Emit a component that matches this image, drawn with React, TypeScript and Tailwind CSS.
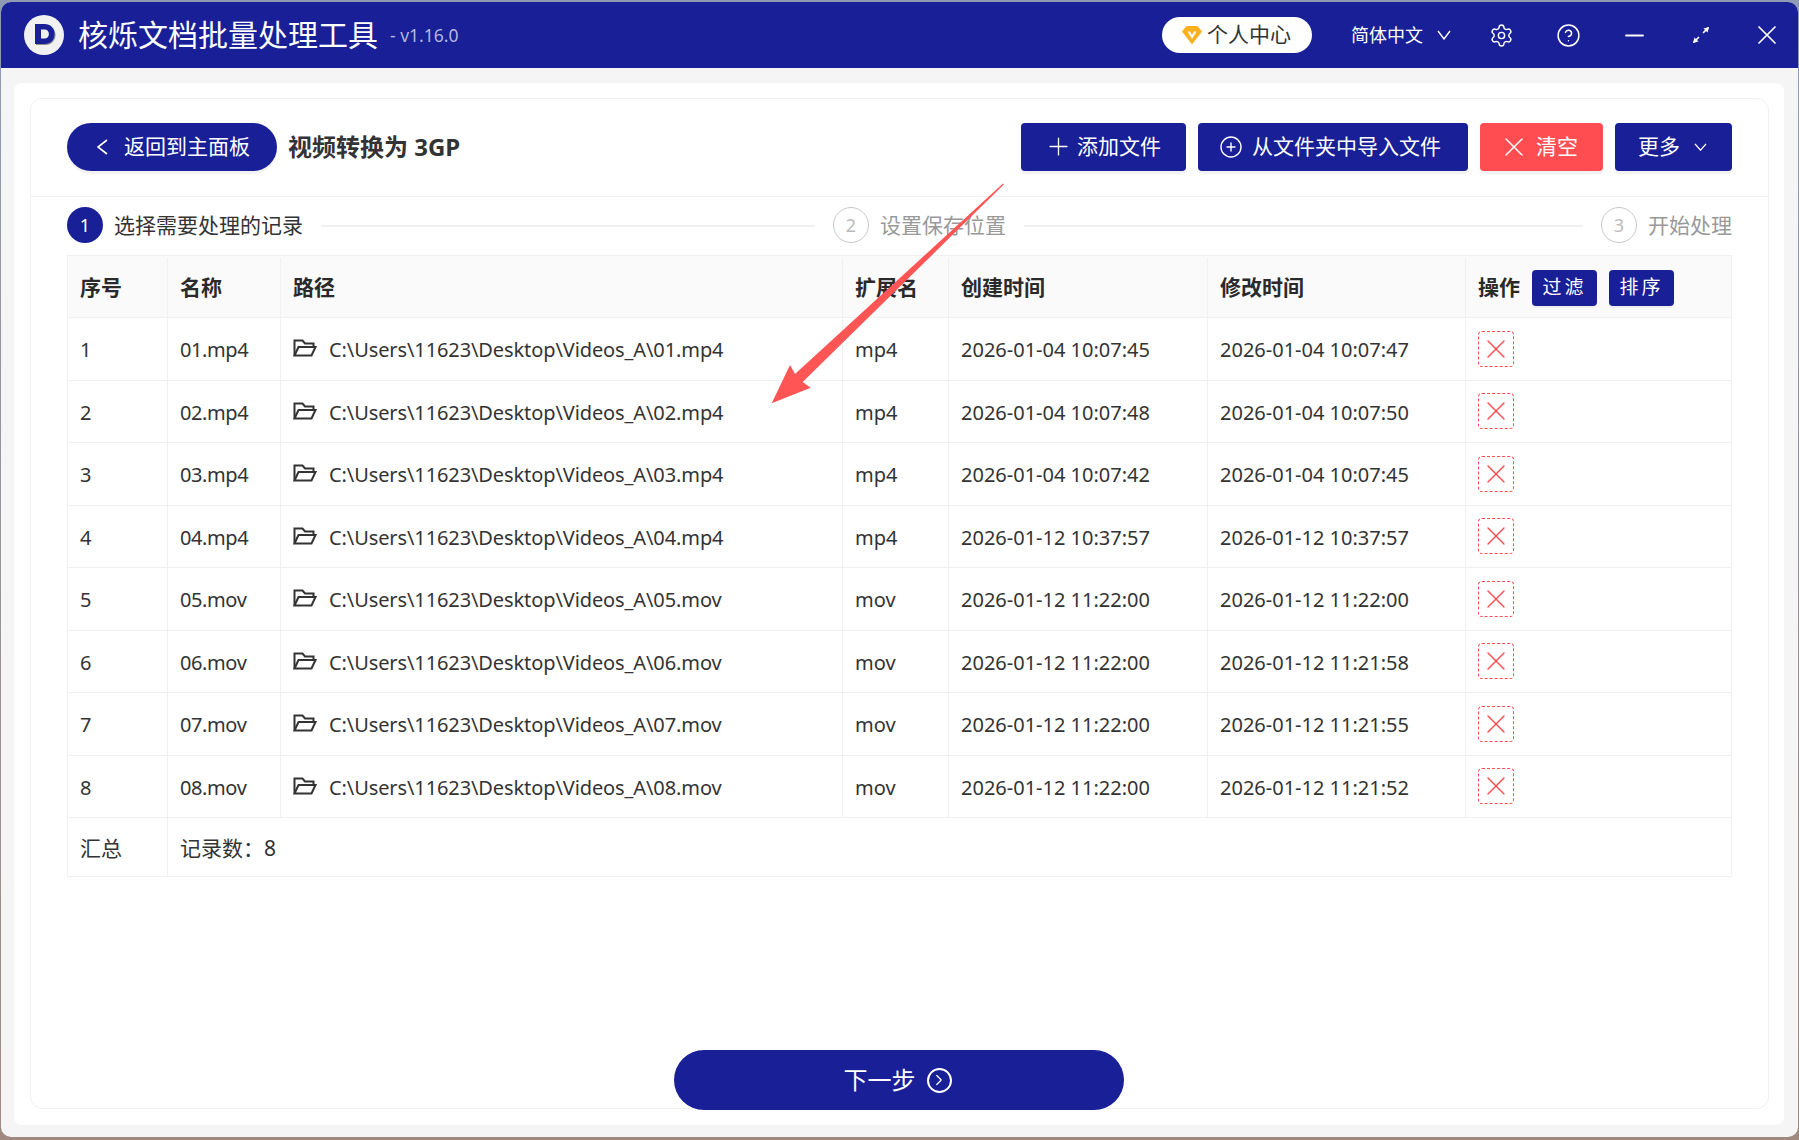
import { Plus, CirclePlus, X, Settings, CircleHelp, Minus, ChevronRight } from 'lucide-react';

const rows = [
    { id: 1, name: '01.mp4', path: 'C:\\Users\\11623\\Desktop\\Videos_A\\01.mp4', ext: 'mp4', created: '2026-01-04 10:07:45', modified: '2026-01-04 10:07:47' },
    { id: 2, name: '02.mp4', path: 'C:\\Users\\11623\\Desktop\\Videos_A\\02.mp4', ext: 'mp4', created: '2026-01-04 10:07:48', modified: '2026-01-04 10:07:50' },
    { id: 3, name: '03.mp4', path: 'C:\\Users\\11623\\Desktop\\Videos_A\\03.mp4', ext: 'mp4', created: '2026-01-04 10:07:42', modified: '2026-01-04 10:07:45' },
    { id: 4, name: '04.mp4', path: 'C:\\Users\\11623\\Desktop\\Videos_A\\04.mp4', ext: 'mp4', created: '2026-01-12 10:37:57', modified: '2026-01-12 10:37:57' },
    { id: 5, name: '05.mov', path: 'C:\\Users\\11623\\Desktop\\Videos_A\\05.mov', ext: 'mov', created: '2026-01-12 11:22:00', modified: '2026-01-12 11:22:00' },
    { id: 6, name: '06.mov', path: 'C:\\Users\\11623\\Desktop\\Videos_A\\06.mov', ext: 'mov', created: '2026-01-12 11:22:00', modified: '2026-01-12 11:21:58' },
    { id: 7, name: '07.mov', path: 'C:\\Users\\11623\\Desktop\\Videos_A\\07.mov', ext: 'mov', created: '2026-01-12 11:22:00', modified: '2026-01-12 11:21:55' },
    { id: 8, name: '08.mov', path: 'C:\\Users\\11623\\Desktop\\Videos_A\\08.mov', ext: 'mov', created: '2026-01-12 11:22:00', modified: '2026-01-12 11:21:52' },
];

const cols = 'grid grid-cols-[100px_113px_562px_106px_259px_258px_265px]';
const cell = 'flex items-center px-3 border-r border-[#f0f0f0] last:border-r-0';
const textCell = `${cell} pt-[3px]`;
const btn = 'flex items-center h-12 rounded bg-[#181f97] text-white text-[21px] shadow-[0_3px_0_#f2f2f2]';

function Logo() {
    return (
        <svg viewBox="0 0 40 40" className="w-10 h-10 shrink-0">
            <circle cx="20" cy="20" r="20" fill="#f1f1f1" />
            <path d="M12 10.5h9.5c6 0 10 4 10 9.5s-4 10-10 10H12z" fill="#8d8d8d" />
            <path d="M11 9h9.5c6 0 10 4 10 10s-4 10-10 10H11z" fill="#181f97" />
            <path d="M17 14.5h3.5c2.8 0 4.4 1.9 4.4 4.5s-1.6 4.6-4.4 4.6H17z" fill="#f1f1f1" />
        </svg>
    );
}

function Gem() {
    return (
        <svg viewBox="0 0 20 20" className="w-5 h-5 shrink-0">
            <path d="M4.5 1h11L20 6.5 10 19.5 0 6.5z" fill="#fbb01d" />
            <path d="M5.5 6.5h2.6L10 10l1.9-3.5h2.6L10 14z" fill="#fff" />
        </svg>
    );
}

function ExpandIcon() {
    return (
        <svg viewBox="0 0 18 18" className="w-[18px] h-[18px]" fill="none" stroke="#fff" strokeWidth="1.6">
            <path d="M11 7l5.5-5.5M1.5 16.5L7 11" />
            <path d="M17 1l-5.5 1.4 4.1 4.1zM1 17l5.5-1.4-4.1-4.1z" fill="#fff" stroke="none" />
        </svg>
    );
}

function Caret({ className }: { className: string }) {
    return (
        <svg viewBox="0 0 14 10" className={className} fill="none" stroke="#fff" strokeWidth="1.4" preserveAspectRatio="none">
            <path d="M1 1l6 8 6-8" />
        </svg>
    );
}

function FolderIcon() {
    return (
        <svg viewBox="0 0 24 18" className="w-6 h-[18px] mr-3 -mt-1 shrink-0" fill="none" stroke="#333333" strokeWidth="2">
            <path d="M1.5 16.5V1.5h8l2.5 3h8.5V8" />
            <path d="M1.5 16.5h17L22.5 8H5.5z" />
        </svg>
    );
}

function Step({ n, label, active }: { n: number; label: string; active?: boolean }) {
    return (
        <div className="flex items-center gap-[11px] shrink-0 -mt-0.5">
            <div className={active
                ? 'flex items-center justify-center w-9 h-9 rounded-full bg-[#181f97] text-white text-lg'
                : 'flex items-center justify-center w-9 h-9 rounded-full border border-[#c8c8c8] text-[#bbbbbb] text-lg'}>
                {n}
            </div>
            <span className={active ? 'pt-0.5 text-[21px] text-[#333333]' : 'pt-0.5 text-[21px] text-[#999999]'}>{label}</span>
        </div>
    );
}

export default function App() {
    return (
        <div className="relative w-[1799px] h-[1140px] overflow-hidden bg-gradient-to-b from-[#8f9bb3] to-[#a08a80] pt-0.5 pl-px pb-[3px] pr-px font-['Noto_Sans','Noto_Sans_CJK_SC',sans-serif] text-[#333333]">
            <div className="flex flex-col h-full rounded-[10px] overflow-hidden bg-[#f5f5f5]">
                {/* title bar */}
                <header className="flex items-center h-[66px] shrink-0 bg-[#181f97] text-white pl-[23px]">
                    <Logo />
                    <h1 className="ml-3.5 text-[30px] leading-none">核烁文档批量处理工具</h1>
                    <span className="ml-3 text-[17.5px] text-[#b4b7dc]">- v1.16.0</span>
                    <div className="ml-auto flex items-center">
                        <div className="flex items-center gap-[5px] w-[150px] h-9 pl-5 rounded-full bg-white text-[#333333] text-[21px]">
                            <Gem />
                            <span>个人中心</span>
                        </div>
                        <span className="ml-[39px] w-[73px] text-lg">简体中文</span>
                        <Caret className="ml-[13px] w-3.5 h-2.5" />
                        <Settings className="ml-[38px] w-[25px] h-[25px]" strokeWidth={1.4} />
                        <CircleHelp className="ml-[42px] w-[25px] h-[25px]" strokeWidth={1.4} />
                        <Minus className="ml-[39px] w-[29px] h-[29px]" strokeWidth={1.6} />
                        <div className="ml-[43px]"><ExpandIcon /></div>
                        <X className="ml-[41px] mr-[15px] w-8 h-8" strokeWidth={1.3} />
                    </div>
                </header>

                {/* white panel */}
                <main className="flex-1 ml-[13px] mr-3.5 mt-[15px] mb-3 flex flex-col rounded-lg bg-white pt-[15px] pl-4 pr-[15px] pb-4">
                    <div className="flex-1 flex flex-col rounded-xl border border-[#f0f0f0]">
                        <div className="flex items-center h-[98px] shrink-0 px-9 pb-0.5 border-b border-[#f0f0f0]">
                            <button className="flex items-center w-[210px] h-12 pl-[29px] gap-4 rounded-full bg-[#181f97] text-white text-[21px] shadow-[0_3px_0_#f2f2f2]">
                                <svg viewBox="0 0 12 16" className="w-3 h-4" fill="none" stroke="#fff" strokeWidth="1.6">
                                    <path d="M11 1L2 8l9 7" />
                                </svg>
                                返回到主面板
                            </button>
                            <h2 className="ml-[11px] text-2xl font-bold text-[#333333]">视频转换为 3GP</h2>
                            <div className="ml-auto flex items-center gap-3">
                                <button className={`${btn} w-[165px] pl-[23px] gap-1`}>
                                    <Plus className="w-[29px] h-[29px]" strokeWidth={1.1} />
                                    添加文件
                                </button>
                                <button className={`${btn} w-[270px] pl-[21px] gap-[9px]`}>
                                    <CirclePlus className="w-6 h-6" strokeWidth={1.4} />
                                    从文件夹中导入文件
                                </button>
                                <button className="flex items-center w-[123px] h-12 pl-[18px] gap-1.5 rounded bg-[#ff4d52] text-white text-[21px] shadow-[0_3px_0_#f2f2f2]">
                                    <X className="w-8 h-8" strokeWidth={1.1} />
                                    清空
                                </button>
                                <button className={`${btn} w-[117px] pl-[23px] gap-3.5`}>
                                    更多
                                    <Caret className="w-[13px] h-2" />
                                </button>
                            </div>
                        </div>

                        <div className="flex items-center h-[58px] shrink-0 px-9 gap-[18px]">
                            <Step n={1} label="选择需要处理的记录" active />
                            <div className="w-[494px] h-0.5 bg-[#f0f0f0]" />
                            <Step n={2} label="设置保存位置" />
                            <div className="flex-1 h-0.5 bg-[#f0f0f0]" />
                            <Step n={3} label="开始处理" />
                        </div>

                        <div className="mx-9 border border-[#f0f0f0] text-[20px]">
                            <div className={`${cols} h-[62px] pt-0.5 bg-[#fafafa] border-b border-[#f0f0f0] text-[21px] font-bold text-[#2a2a2a]`}>
                                <div className={`${cell} pt-px`}>序号</div>
                                <div className={`${cell} pt-px`}>名称</div>
                                <div className={`${cell} pt-px`}>路径</div>
                                <div className={`${cell} pt-px`}>扩展名</div>
                                <div className={`${cell} pt-px`}>创建时间</div>
                                <div className={`${cell} pt-px`}>修改时间</div>
                                <div className={cell}>
                                    操作
                                    <button className="ml-3 w-[65px] h-9 rounded bg-[#181f97] text-white text-[19px] font-normal tracking-[3px] shadow-[0_2px_0_#eeeeee]">过滤</button>
                                    <button className="ml-3 w-[65px] h-9 rounded bg-[#181f97] text-white text-[19px] font-normal tracking-[3px] shadow-[0_2px_0_#eeeeee]">排序</button>
                                </div>
                            </div>
                            {rows.map((row) => (
                                <div key={row.id} className={`${cols} h-[62.5px] border-b border-[#f0f0f0]`}>
                                    <div className={textCell}>{row.id}</div>
                                    <div className={`${textCell} tracking-[-0.4px]`}>{row.name}</div>
                                    <div className={`${textCell} tracking-[-0.1px]`}>
                                        <FolderIcon />
                                        {row.path}
                                    </div>
                                    <div className={textCell}>{row.ext}</div>
                                    <div className={textCell}>{row.created}</div>
                                    <div className={textCell}>{row.modified}</div>
                                    <div className={cell}>
                                        <div className="flex items-center justify-center w-9 h-9 rounded-sm border border-dashed border-[#ff4d52]">
                                            <X className="w-8 h-8 text-[#ff4d52]" strokeWidth={1} />
                                        </div>
                                    </div>
                                </div>
                            ))}
                            <div className="grid grid-cols-[100px_1fr] h-[58px] text-[21px]">
                                <div className={textCell}>汇总</div>
                                <div className="flex items-center px-3 pt-[3px]">记录数：8</div>
                            </div>
                        </div>

                        <div className="flex-1 flex items-end justify-center pr-0.5 -mb-0.5">
                            <button className="flex items-center justify-center gap-[11px] w-[450px] h-[60px] pr-0.5 rounded-full bg-[#181f97] text-white text-2xl">
                                下一步
                                <span className="flex items-center justify-center w-[25px] h-[25px] rounded-full border-2 border-white">
                                    <ChevronRight className="w-[18px] h-[18px]" strokeWidth={1.6} />
                                </span>
                            </button>
                        </div>
                    </div>
                </main>
            </div>

            {/* annotation arrow drawn on top of the screenshot */}
            <svg className="absolute inset-0 w-[1799px] h-[1140px] pointer-events-none" viewBox="0 0 1799 1140">
                <polygon points="1003,183.5 1003.8,184.6 802.7,382 810.7,387.7 771.7,403.3 790,365 795,374" fill="#ff5555" />
            </svg>
        </div>
    );
}
